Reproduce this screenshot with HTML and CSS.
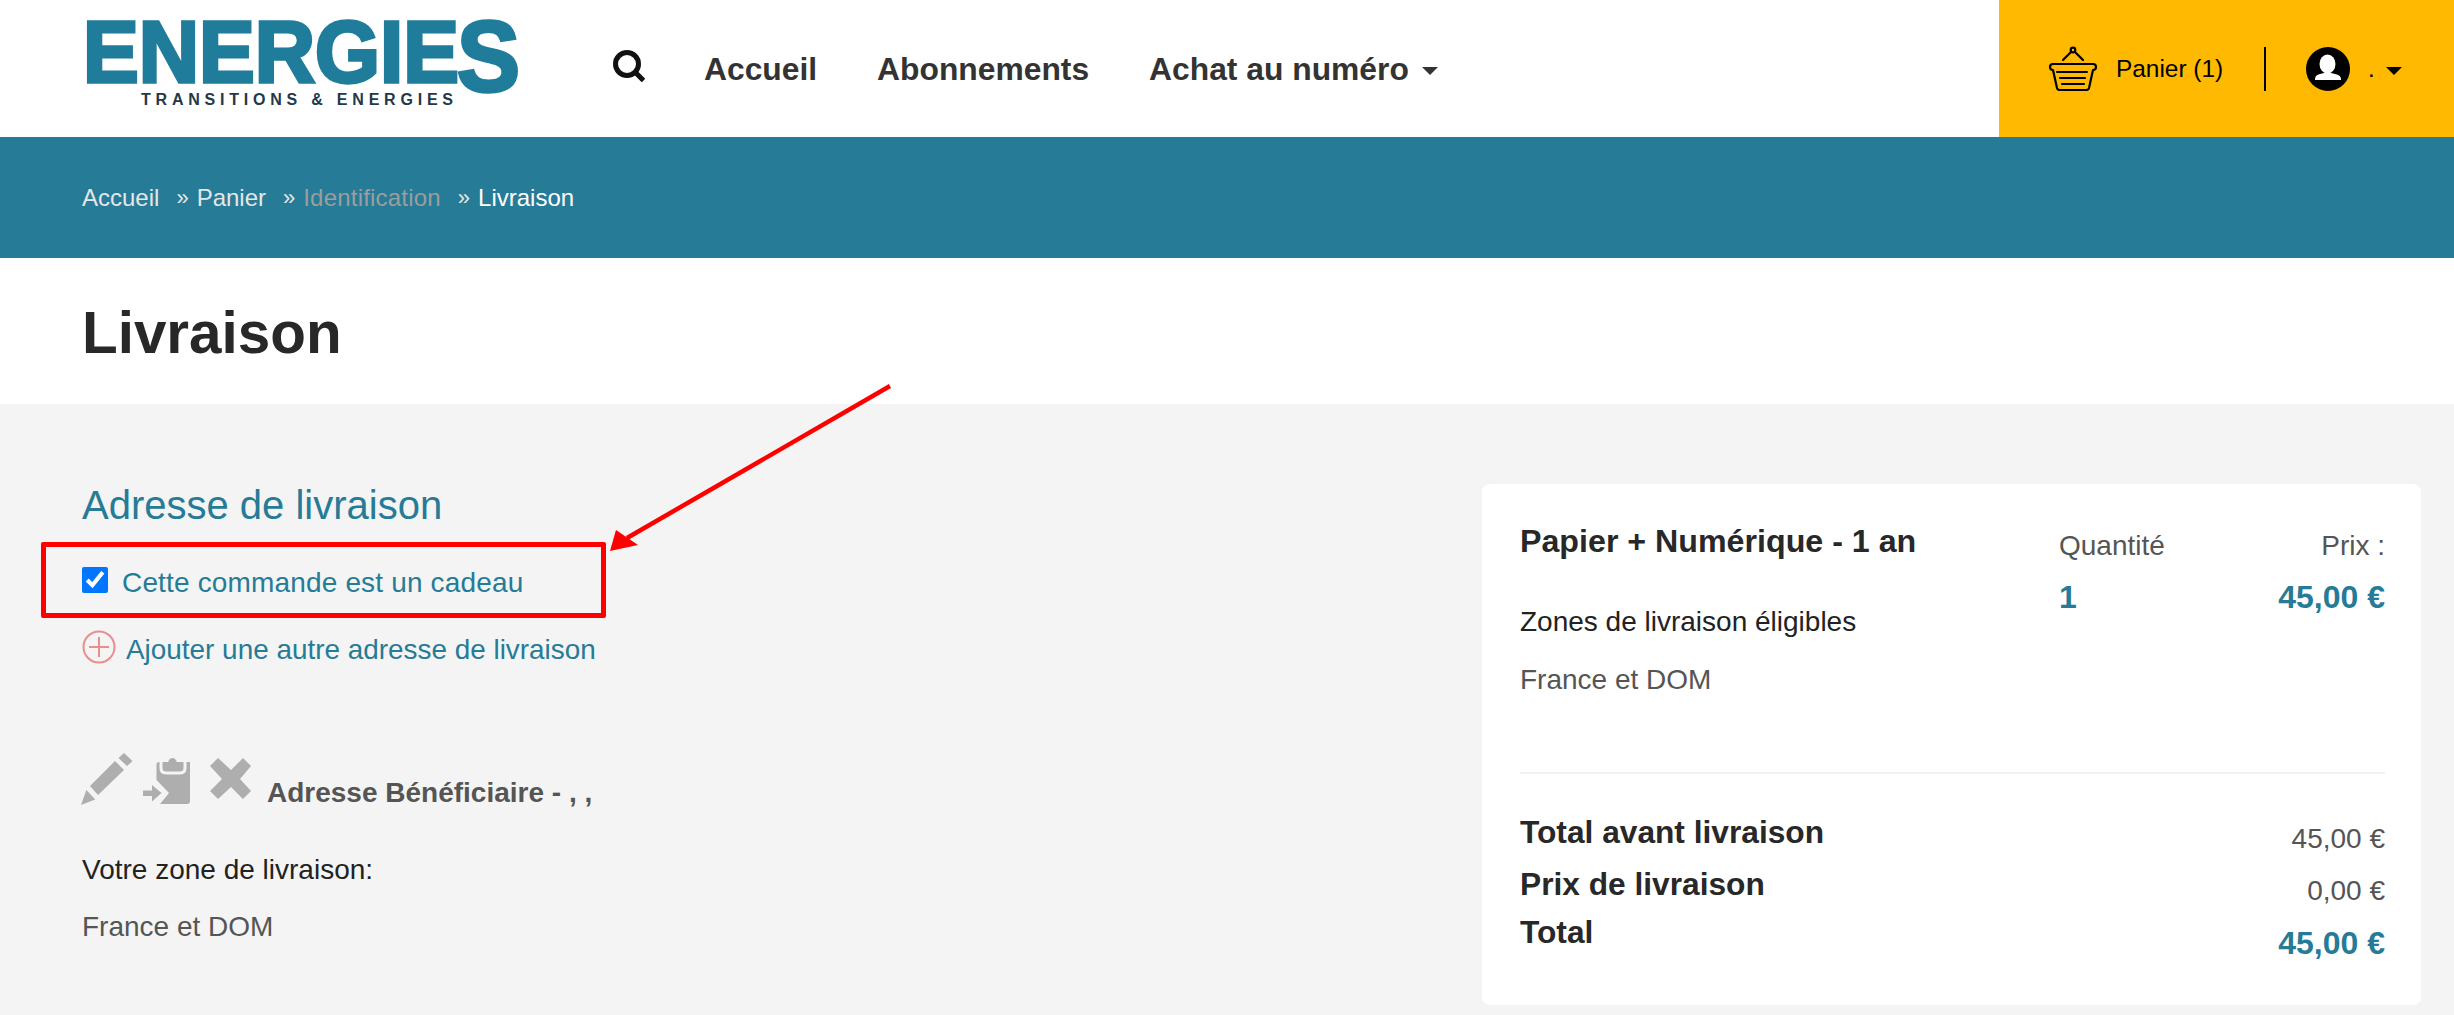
FILE: index.html
```html
<!DOCTYPE html>
<html lang="fr">
<head>
<meta charset="utf-8">
<title>Livraison</title>
<link rel="stylesheet" href="styles.css">
</head>
<body>
<header class="topbar">
  <a class="logo" href="#">
    <svg class="logo-svg" viewBox="0 0 431 90" width="431" height="90">
      <text class="logo-main" x="-4" y="66" textLength="376" lengthAdjust="spacingAndGlyphs">ENERGIE</text>
      <text class="logo-s" x="370" y="75" textLength="63" lengthAdjust="spacingAndGlyphs">S</text>
      <text class="logo-tag" x="54" y="89" textLength="312" lengthAdjust="spacing">TRANSITIONS &amp; ENERGIES</text>
    </svg>
  </a>
  <nav class="nav">
    <svg class="search" viewBox="0 0 33 32" width="33" height="32"><circle cx="14" cy="14" r="11.500" fill="none" stroke="#111" stroke-width="5"/><path d="M22 22l8.500 8.500" stroke="#111" stroke-width="5" fill="none"/></svg>
    <a class="nav-link" href="#">Accueil</a>
    <a class="nav-link" href="#">Abonnements</a>
    <a class="nav-link" href="#">Achat au numéro<span class="caret caret-nav"></span></a>
  </nav>
  <div class="account">
    <svg class="basket" viewBox="0 0 48 44" width="48" height="44" fill="none" stroke="#000" stroke-width="2.200" stroke-linecap="round" stroke-linejoin="round">
      <circle cx="24" cy="3" r="2.300"/>
      <path d="M22 5l-8 8M26 5l8 8"/>
      <path d="M4 17h40q3 0 3 3t-3 3l-4 18q-.5 2-3 2H11q-2.500 0-3-2L4 23q-3 0-3-3t3-3z"/>
      <path d="M8 25h30M11 31h25M13 37h22"/>
    </svg>
    <span class="cart-label">Panier (1)</span>
    <span class="vline"></span>
    <svg class="avatar" viewBox="0 0 44 44" width="44" height="44">
      <circle cx="22" cy="22" r="22" fill="#000"/>
      <ellipse cx="21.500" cy="17" rx="8" ry="9.500" fill="#fff"/>
      <path d="M9 33v-1q0-4 5-5l4-1h7l4 1q6 1 6 5v1z" fill="#fff"/>
    </svg>
    <span class="user-dot">.</span>
    <span class="caret caret-user"></span>
  </div>
</header>

<div class="crumbs">
  <a class="crumb" href="#">Accueil</a><span class="sep">»</span>
  <a class="crumb" href="#">Panier</a><span class="sep">»</span>
  <a class="crumb crumb-muted" href="#">Identification</a><span class="sep">»</span>
  <span class="crumb crumb-current">Livraison</span>
</div>

<div class="title-band"><h1 class="title">Livraison</h1></div>

<main class="main">
  <section class="left">
    <h2 class="section-title">Adresse de livraison</h2>
    <label class="gift"><input class="gift-box" type="checkbox" checked><span>Cette commande est un cadeau</span></label>
    <a class="add" href="#">
      <svg class="plus" viewBox="0 0 34 34" width="34" height="34" fill="none" stroke="#ea8d8d" stroke-width="2"><circle cx="17" cy="17" r="15.500"/><path d="M17 7v20M7 17h20"/></svg>
      <span class="add-text">Ajouter une autre adresse de livraison</span>
    </a>
    <div class="addr-head">
      <svg class="ic-pencil" viewBox="0 0 52 52" width="52" height="52" fill="#aeaeae"><path d="M0 52l5.400-15 8.900 9.500zM9 33L34 8l9 9-26 25zM37.500 5L43 0l8.500 8-5.500 5z"/></svg>
      <svg class="ic-clip" viewBox="0 0 47 46" width="47" height="46"><path fill="#aeaeae" d="M16 4h31v39q0 3-3 3H17l9-11-12.500-13V6.500Q13.500 4 16 4z"/><path fill="none" stroke="#f4f4f4" stroke-width="3" d="M18 3v7q0 5 5 5h14q5 0 5-5V3"/><path fill="#aeaeae" d="M22.500 6h2.500q0-5 4-6h1q4 1 4 6h2.500v5h-14zM0 32.500h9V27l9.500 8L9 43.500V38H0z"/></svg>
      <svg class="ic-x" viewBox="0 0 41 42" width="41" height="42" fill="#aeaeae"><path d="M0 8l8-8 13 12L33 0l8 8-11 13 11 12-8 8-12-12L8 41l-8-8 12-12z"/></svg>
      <strong class="addr-name">Adresse Bénéficiaire - , ,</strong>
    </div>
    <p class="zone-label">Votre zone de livraison:</p>
    <p class="zone-value">France et DOM</p>
  </section>

  <aside class="card">
    <div class="item">
      <div class="item-info">
        <h3 class="item-name">Papier + Numérique - 1 an</h3>
        <p class="zone-title">Zones de livraison éligibles</p>
        <p class="zone-list">France et DOM</p>
      </div>
      <div class="item-qty">
        <span class="col-head">Quantité</span>
        <strong class="accent">1</strong>
      </div>
      <div class="item-price">
        <span class="col-head">Prix :</span>
        <strong class="accent">45,00 €</strong>
      </div>
    </div>
    <div class="totals">
      <div class="row row-a"><strong class="row-label">Total avant livraison</strong><span class="row-val">45,00 €</span></div>
      <div class="row row-b"><strong class="row-label">Prix de livraison</strong><span class="row-val">0,00 €</span></div>
      <div class="row row-c"><strong class="row-label">Total</strong><strong class="accent row-total">45,00 €</strong></div>
    </div>
  </aside>
</main>

<div class="callout-box"></div>
<svg class="callout-arrow" viewBox="0 0 300 180" width="300" height="180">
  <path d="M290 6L27 158" stroke="#fe0000" stroke-width="4.500" fill="none"/>
  <path d="M10 171l6-21 22 15z" fill="#fe0000"/>
</svg>
</body>
</html>
```
FILE: styles.css
```css
* { box-sizing: border-box; }
html, body { margin: 0; padding: 0; }
body {
  position: relative;
  min-height: 1015px;
  overflow: hidden;
  background: #f4f4f4;
  font-family: "Liberation Sans", Arial, sans-serif;
  color: #222;
}
a { text-decoration: none; color: inherit; }
p, h1, h2, h3 { margin: 0; }

.topbar { display: flex; align-items: center; height: 137px; background: #fff; }
.logo { display: block; margin-left: 87px; margin-top: 16px; align-self: flex-start; height: 90px; }
.logo-svg { display: block; overflow: visible; }
.logo-main, .logo-s { font-family: "Liberation Sans", sans-serif; font-weight: 700; fill: #1f7c9b; stroke: #1f7c9b; stroke-width: 3.500px; }
.logo-main { font-size: 88px; }
.logo-s { font-size: 100px; }
.logo-tag { font-family: "Liberation Sans", sans-serif; font-weight: 700; font-size: 16px; fill: #24384a; }

.nav { display: flex; align-items: center; margin-left: 95px; }
.search { display: block; margin-top: -6px; }
.nav-link { font-size: 31.800px; font-weight: 700; color: #333; line-height: 40px; margin-left: 60px; display: flex; align-items: center; }
.search + .nav-link { margin-left: 58px; }
.caret { display: inline-block; width: 0; height: 0; border-left: 8px solid transparent; border-right: 8px solid transparent; border-top: 8px solid #333; }
.caret-nav { margin-left: 13px; margin-top: 4px; }

.account { display: flex; align-items: center; margin-left: auto; width: 455px; height: 137px; padding-left: 50px; background: #ffb900; color: #000; }
.basket { display: block; overflow: visible; }
.cart-label { margin-left: 19px; font-size: 24.400px; width: 107px; white-space: nowrap; }
.vline { width: 2px; height: 44px; margin-left: 41px; background: #000; }
.avatar { display: block; margin-left: 40px; }
.user-dot { margin-left: 18px; font-size: 24px; width: 18px; }
.caret-user { border-top-color: #000; margin-top: 4px; }

.crumbs { display: flex; align-items: center; height: 121px; padding-left: 82px; background: #267b97; font-size: 24px; color: #e6e6e6; }
.sep { margin: 0 8px 0 17px; font-size: 22px; }
.crumb-muted { color: #9d9d9d; letter-spacing: .2px; }
.crumb-current { color: #fff; }

.title-band { display: flex; align-items: center; height: 146px; padding: 4px 0 0 82px; background: #fff; }
.title { font-size: 58.400px; font-weight: 700; color: #282828; line-height: 66px; }

.main { display: flex; justify-content: space-between; padding: 80px 33px 0 82px; }
.left { font-size: 28px; }
.section-title { font-size: 40px; font-weight: 400; line-height: 42px; color: #267b97; }
.gift { display: flex; align-items: center; height: 34px; margin-top: 40px; color: #267b97; letter-spacing: .16px; }
.gift-box { width: 26px; height: 26px; margin: -7px 14px 0 0; accent-color: #0075ff; }
.add { display: flex; align-items: center; height: 34px; margin-top: 30px; color: #267b97; }
.add-text { padding-top: 5px; font-size: 27.900px; white-space: nowrap; }
.plus { display: block; margin-right: 10px; }

.addr-head { display: flex; align-items: flex-start; margin-top: 89px; height: 56px; }
.ic-pencil { display: block; margin-left: -1px; }
.ic-clip { display: block; margin: 5px 0 0 10px; }
.ic-x { display: block; margin: 5px 0 0 20px; }
.addr-name { margin: 24px 0 0 16px; font-size: 28px; line-height: 32px; color: #555; white-space: nowrap; }
.zone-label { margin-top: 44px; line-height: 34px; color: #222; }
.zone-value { margin-top: 23px; line-height: 34px; color: #555; }

.card { width: 939px; height: 521px; padding: 39px 36px 0 38px; background: #fff; border-radius: 8px; }
.item { display: flex; height: 251px; border-bottom: 2px solid #f1f1f1; }
.item-info { width: 539px; }
.item-name { margin-top: -1px; font-size: 32.200px; font-weight: 700; line-height: 38px; color: #282828; white-space: nowrap; }
.zone-title { margin-top: 45px; font-size: 28px; line-height: 34px; color: #222; }
.zone-list { margin-top: 24px; font-size: 28px; line-height: 34px; color: #555; }
.item-qty, .item-price { display: flex; flex-direction: column; padding-top: 6px; }
.item-price { flex: 1; align-items: flex-end; }
.col-head { font-size: 28px; line-height: 34px; color: #555; }
.accent { font-size: 32px; font-weight: 700; line-height: 38px; color: #267b97; }
.item-qty .accent, .item-price .accent { margin-top: 15px; }

.totals { padding-top: 39px; }
.row { display: flex; justify-content: space-between; align-items: flex-start; }
.row-label { font-size: 31.700px; font-weight: 700; line-height: 38px; color: #282828; }
.row-val { margin-top: 9px; font-size: 28px; line-height: 34px; color: #555; }
.row-b { margin-top: 9px; }
.row-c { margin-top: 5px; }
.row-total { margin-top: 11px; }

.callout-box { position: absolute; left: 41px; top: 542px; width: 565px; height: 76px; border: 5px solid #fe0000; border-radius: 2px; }
.callout-arrow { position: absolute; left: 600px; top: 380px; }
```
